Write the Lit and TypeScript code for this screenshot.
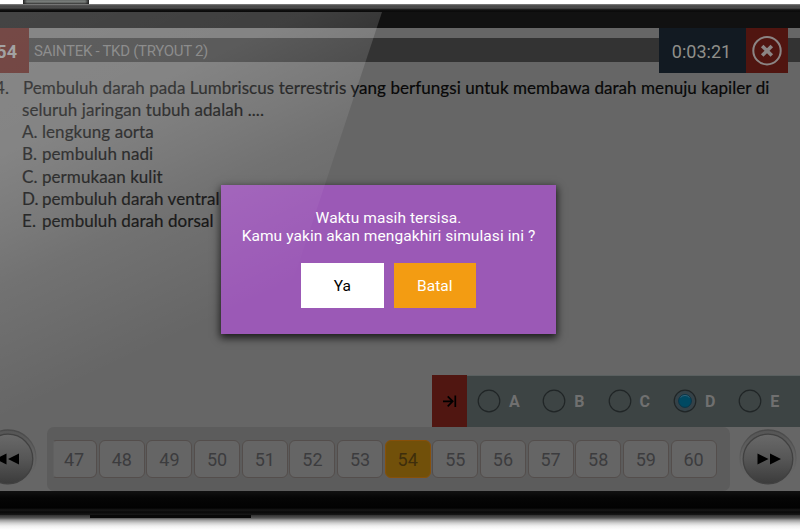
import { LitElement, html, css, svg } from "lit";
import { customElement, property } from "lit/decorators.js";
import { classMap } from "lit/directives/class-map.js";

const QUESTION = [
  "Pembuluh darah pada Lumbriscus terrestris yang berfungsi untuk membawa darah menuju kapiler di",
  "seluruh jaringan tubuh adalah ....",
];
const ANSWERS = [
  ["A.", "lengkung aorta"],
  ["B.", "pembuluh nadi"],
  ["C.", "permukaan kulit"],
  ["D.", "pembuluh darah ventral"],
  ["E.", "pembuluh darah dorsal"],
];
const NUMBERS = Array.from({ length: 14 }, (_, i) => 47 + i);

@customElement("round-button")
class RoundButton extends LitElement {
  @property() direction = "next";

  static styles = css`
    :host { display: block; width: 60px; height: 60px; }
    svg { display: block; }
  `;

  render() {
    const arrows =
      this.direction === "next"
        ? svg`<path d="M19.500 24.500 30.500 30l-11 5.500zM32 24.500 43 30 32 35.500z" fill="#000"/>`
        : svg`<path d="M41 24.500 30 30l11 5.500zM28.500 24.500 17.500 30l11 5.500z" fill="#000"/>`;
    return html`<svg width="60" height="60" viewBox="0 0 60 60">
      <defs>
        <linearGradient id="face" x1="0" y1="0" x2="0" y2="1">
          <stop offset="0" stop-color="#696969" />
          <stop offset="0.5" stop-color="#565656" />
          <stop offset="1" stop-color="#3b3b3b" />
        </linearGradient>
        <linearGradient id="ring" x1="0" y1="0" x2="0" y2="1">
          <stop offset="0" stop-color="#494949" />
          <stop offset="0.6" stop-color="#606060" />
          <stop offset="0.8" stop-color="#666" stop-opacity="0" />
        </linearGradient>
        <linearGradient id="well" x1="0" y1="0" x2="0" y2="1">
          <stop offset="0" stop-color="#555" />
          <stop offset="0.5" stop-color="#646464" />
          <stop offset="1" stop-color="#666" />
        </linearGradient>
      </defs>
      <circle cx="30" cy="29" r="28" fill="url(#well)" stroke="url(#ring)" stroke-width="1.300" />
      <circle cx="30" cy="30" r="24.800" fill="url(#face)" stroke="#414141" stroke-width="1.300" />
      ${arrows}
    </svg>`;
  }
}

@customElement("confirm-dialog")
class ConfirmDialog extends LitElement {
  static styles = css`
    :host {
      display: flex;
      flex-direction: column;
      align-items: center;
      box-sizing: border-box;
      width: 335px;
      height: 149px;
      padding-top: 24px;
      background: #9b59b6;
      box-shadow: 0 3px 8px 1px rgba(0, 0, 0, 0.75);
      color: #fff;
      font: 15.5px/18px Roboto, sans-serif;
      text-align: center;
    }
    .message { white-space: nowrap; letter-spacing: 0.08px; }
    .actions { display: flex; gap: 10px; margin-top: 18px; }
    .button { width: 82.5px; height: 45px; line-height: 47px; background: #f39c12; }
    .button.yes { background: #fff; color: #000; }
  `;

  render() {
    return html`
      <div class="message">Waktu masih tersisa.<br />Kamu yakin akan mengakhiri simulasi ini ?</div>
      <div class="actions">
        <div class="button yes">Ya</div>
        <div class="button">Batal</div>
      </div>
    `;
  }
}

@customElement("app-root")
class AppRoot extends LitElement {
  static styles = css`
    :host {
      display: block;
      position: relative;
      width: 800px;
      height: 530px;
      overflow: hidden;
      background: #fff;
      font-family: Roboto, sans-serif;
    }
    .phone { display: flex; flex-direction: column; height: 530px; }
    .top-key {
      width: 66px; height: 4px; margin-left: 23px; flex: none;
      background: linear-gradient(90deg, #222, transparent 6%, transparent 94%, #222), linear-gradient(#6c706e 25%, #7d827f 45%, #333 100%);
    }
    .rim {
      height: 8px; flex: none;
      background: linear-gradient(#969696 0, #555 1px, #444 3px, #505050 4px, #292929 5px, #101010 6px, #090909 8px);
    }
    .bezel { height: 16px; flex: none; background: #111; }
    .screen { height: 463px; flex: none; display: flex; flex-direction: column; background: #666; }
    .chin { height: 24px; flex: none; background: linear-gradient(#111, #050505 7px, #020202 17px, #171717 19px, #080808 21px, #181818 24px); }
    .drop {
      height: 15px; flex: none;
      background: linear-gradient(#303030, #555 3px, #999 5px, #cfcfcf 8px, #f0f0f0 11px, #fff 15px);
    }
    .bottom-key { width: 161px; height: 3px; margin-left: 90px; background: #080808; }

    .header { display: flex; height: 45px; background: linear-gradient(#666 10px, #333 10px, #333 34px, #666 34px); }
    .badge {
      display: flex; align-items: center; justify-content: flex-end; box-sizing: border-box;
      width: 29px; height: 45px; padding: 2px 12px 0 0;
      background: #501814; color: #8a8a8a; font-weight: 700; font-size: 18px;
    }
    .title { flex: 1; padding-left: 5px; line-height: 47px; font-size: 15px; letter-spacing: -0.3px; color: #707070; }
    .timer { width: 87px; line-height: 47px; text-align: center; font-size: 18px; color: #8f8f8a; background: #121a22; text-indent: -2px; }
    .close { width: 42px; margin-right: 12px; background: #501510; }
    .close svg { display: block; }

    .question {
      height: 302px; box-sizing: border-box; padding: 3.5px 0 0 22px;
      font: 17px/22.25px Lato, "Open Sans", sans-serif; color: #080808;
      -webkit-text-stroke: 0.2px #080808;
    }
    .line { height: 22.25px; display: flex; white-space: nowrap; letter-spacing: 0.06px; }
    .line .letter { width: 20px; }
    .number { width: 32px; margin-left: -45px; margin-right: 13px; text-align: right; }
    .first { margin-left: 1px; }

    .answers { display: flex; height: 52px; margin-left: 432px; background: #3d4444; box-shadow: inset 0 1px #5a6060; }
    .skip { width: 35px; background: #501611; }
    .skip svg { display: block; }
    .options { display: flex; padding-left: 10px; }
    .option { display: flex; align-items: center; width: 65.3px; flex: none; gap: 8px; font-weight: 700; font-size: 16px; color: #707070; }
    .option svg { flex: none; }

    .pager { display: flex; height: 64px; }
    .pager round-button { flex: none; margin-top: 2px; }
    .prev { margin-left: -22px; }
    .track {
      box-sizing: border-box; display: flex; gap: 1.65px; width: 683px; flex: none; height: 64px;
      margin: 0 8px 0 9px; padding: 13px 0 0 6px; border-radius: 7px; background: #5c5c5c;
    }
    .cell {
      box-sizing: border-box; width: 46px; height: 38px; flex: none; border: 1px solid #544e4c; border-radius: 6px;
      background: #656565; color: #3c3c3e; font-size: 18px; line-height: 38px; text-align: center;
    }
    .cell:first-child { width: 44.2px; border-left-color: #606060; border-radius: 3px 6px 6px 3px; text-indent: -2px; }
    .cell.current { background: #71500a; border-color: #87500a; color: #3e2e0c; }

    .glare {
      position: absolute; inset: 12px 0 0 0; pointer-events: none;
      clip-path: polygon(0 0, 382px 0, 210px 520px, 0 520px);
      background: linear-gradient(155deg, rgba(255, 255, 255, 0.215) 0, rgba(255, 255, 255, 0.195) 130px, rgba(255, 255, 255, 0.125) 206px, rgba(255, 255, 255, 0.08) 250px, rgba(255, 255, 255, 0) 370px);
    }
    confirm-dialog { position: absolute; left: 221px; top: 185px; }
  `;

  render() {
    return html`
      <div class="phone">
        <div class="top-key"></div>
        <div class="rim"></div>
        <div class="bezel"></div>
        <div class="screen">
          <div class="header">
            <div class="badge">54</div>
            <div class="title">SAINTEK - TKD (TRYOUT 2)</div>
            <div class="timer">0:03:21</div>
            <div class="close">
              <svg width="42" height="45" viewBox="0 0 42 45" fill="none" stroke="#8b8584">
                <circle cx="21" cy="22.700" r="13.700" stroke-width="2" />
                <path d="m16.200 17.900 9.600 9.600m0-9.600-9.600 9.600" stroke-width="3.600" />
              </svg>
            </div>
          </div>
          <div class="question">
            <div class="line"><span class="number">54.</span><span class="first">${QUESTION[0]}</span></div>
            <div class="line">${QUESTION[1]}</div>
            ${ANSWERS.map(([l, t]) => html`<div class="line"><span class="letter">${l}</span><span>${t}</span></div>`)}
          </div>
          <div class="answers">
            <div class="skip">
              <svg width="35" height="52" viewBox="0 0 35 52" fill="none" stroke="#000" stroke-width="1.700">
                <path d="M11 26.300h9.500M15.700 21.300l5 5-5 5M23.300 20.500v11.600" />
              </svg>
            </div>
            <div class="options">
              ${["A", "B", "C", "D", "E"].map(
                (l) => html`<div class="option">
                  <svg width="24" height="24" viewBox="0 0 24 24">
                    <circle cx="12" cy="12" r="10.800" fill=${l === "D" ? "#354248" : "none"} stroke="#202526" stroke-width="1.200" />
                    ${l === "D" ? svg`<circle cx="12" cy="12" r="6.400" fill="#004962" stroke="#0b3547"/><path d="M7.500 8.500a6 6 0 0 1 9 0" fill="none" stroke="#356277"/>` : null}
                  </svg>
                  <span>${l}</span>
                </div>`,
              )}
            </div>
          </div>
          <div class="pager">
            <round-button class="prev" direction="prev"></round-button>
            <div class="track">
              ${NUMBERS.map((n) => html`<div class=${classMap({ cell: true, current: n === 54 })}>${n}</div>`)}
            </div>
            <round-button direction="next"></round-button>
          </div>
        </div>
        <div class="chin"></div>
        <div class="drop"><div class="bottom-key"></div></div>
      </div>
      <confirm-dialog></confirm-dialog>
      <div class="glare"></div>
    `;
  }
}
